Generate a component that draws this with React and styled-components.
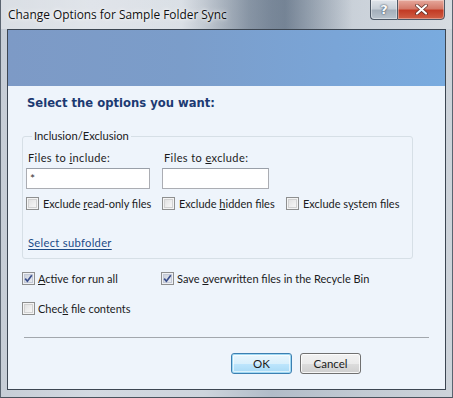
import React from "react";
import styled, { createGlobalStyle, css } from "styled-components";

const GlobalStyle = createGlobalStyle`
  html, body { margin: 0; padding: 0; background: #ffffff; }
  body { width: 453px; height: 398px; overflow: hidden; }
`;

const ui = `Lato, "Open Sans", "Liberation Sans", sans-serif`;

const Window = styled.div`
  width: 453px;
  height: 398px;
  box-sizing: border-box;
  display: flex;
  flex-direction: column;
  background: linear-gradient(90deg, #c6cdd6 0%, #d3d9e1 20%, #cdd4dc 45%, #b1bcc8 60%, #c2cad3 80%, #cdd3da 100%);
  border-left: 1px solid #5a6470;
  border-right: 1px solid #5a6470;
  border-bottom: 1px solid #4a525c;
  font-family: ${ui};
`;

const TitleBar = styled.div`
  height: 29px;
  flex: none;
  display: flex;
  align-items: flex-start;
  justify-content: space-between;
  padding: 0 7px 0 7px;
  background: linear-gradient(90deg, rgba(255,255,255,0.35) 0%, rgba(255,255,255,0.25) 40%, rgba(40,60,85,0.35) 55%, rgba(40,60,85,0.45) 63%, rgba(255,255,255,0.15) 78%, rgba(255,255,255,0.2) 100%);
`;

const Title = styled.div`
  margin-top: 6px;
  font-family: "Open Sans", sans-serif;
  font-size: 11.9px;
  line-height: 17px;
  color: #111;
  text-shadow: 0 0 6px rgba(255,255,255,0.9), 0 0 3px rgba(255,255,255,0.9);
  white-space: nowrap;
`;

const Caption = styled.div`
  display: flex;
  margin-top: -1px;
`;

const CapBtn = styled.div`
  height: 21px;
  box-sizing: border-box;
  display: flex;
  align-items: center;
  justify-content: center;
  border: 1px solid #4d5866;
  color: #fff;
  font-family: "DejaVu Sans", sans-serif;
  font-weight: bold;
  ${(p) =>
    p.$kind === "close"
      ? css`
          width: 48px;
          border-radius: 0 0 4px 0;
          background: linear-gradient(180deg, #e6a89c 0%, #d47a6a 45%, #c23b25 55%, #cf5f45 100%);
          box-shadow: inset 0 0 0 1px rgba(255,255,255,0.35);
        `
      : css`
          width: 27px;
          border-right: none;
          border-radius: 0 0 0 4px;
          background: linear-gradient(180deg, #dfe4ea 0%, #c6ced7 45%, #a4afbb 55%, #b9c3cd 100%);
          box-shadow: inset 0 0 0 1px rgba(255,255,255,0.4);
          font-size: 13px;
          color: #fbfcfd;
          text-shadow: 0 0 2px #435163, 0 0 1px #435163;
        `}
`;

const Client = styled.div`
  flex: 1;
  margin: 0 6px 7px 6px;
  border: 1px solid #3c4652;
  display: flex;
  flex-direction: column;
  background: #eef4fb;
`;

const Banner = styled.div`
  height: 56px;
  flex: none;
  background: linear-gradient(90deg, #7d9ac6 0%, #7b9dca 40%, #7aa5d7 75%, #79abdf 100%);
`;

const Body = styled.div`
  flex: 1;
  display: flex;
  flex-direction: column;
  padding: 9px 0 0 14px;
`;

const Heading = styled.div`
  margin-left: 5px;
  font-family: "DejaVu Sans", Verdana, sans-serif;
  font-weight: bold;
  font-size: 11.6px;
  line-height: 16px;
  color: #1c3a72;
`;

const Group = styled.fieldset`
  margin: 18px 0 0 0;
  width: 391px;
  box-sizing: border-box;
  border: 1px solid #d6dfe6;
  border-radius: 3px;
  padding: 7px 0 8px 3px;
  min-width: 0;
`;

const Legend = styled.legend`
  margin-left: 6px;
  padding: 0 2px 0 2px;
  font-size: 11.2px;
  line-height: 14px;
  color: #1b1b1b;
`;

const Text = styled.span`
  font-size: 11px;
  line-height: 15px;
  color: #1b1b1b;
  white-space: nowrap;
`;

const FieldRow = styled.div`
  display: grid;
  grid-template-columns: 136px 124px;
  align-items: start;
`;

const Field = styled.div`
  display: flex;
  flex-direction: column;
  gap: 3px;
`;

const FieldLabel = styled(Text)`
  padding-left: 2px;
  letter-spacing: 0.4px;
`;

const Input = styled.input`
  box-sizing: border-box;
  width: ${(p) => p.$w}px;
  height: 21px;
  margin: 0;
  border: 1px solid #abadb3;
  border-top-color: #999fa8;
  background: #fff;
  font-family: ${ui};
  font-size: 12px;
  color: #333;
  padding: 0 3px;
  outline: none;
`;

const CheckRow = styled.div`
  display: grid;
  grid-template-columns: ${(p) => p.$cols};
  margin-top: ${(p) => p.$mt || 0}px;
  align-items: center;
`;

const CheckItem = styled.label`
  display: flex;
  align-items: center;
  gap: ${(p) => p.$gap ?? 4}px;
`;

const Box = styled.span`
  width: 13px;
  height: 13px;
  box-sizing: border-box;
  flex: none;
  border: 1px solid #8e8f8f;
  background: linear-gradient(135deg, #dcdcdc 0%, #f0f0f0 60%, #fbfbfb 100%);
  box-shadow: inset 0 0 0 1px #f4f4f4, inset 0 0 0 2px #d2d2d2;
  display: flex;
  align-items: center;
  justify-content: center;
  ${(p) =>
    p.$checked &&
    css`
      background: linear-gradient(135deg, #c6cbd6 0%, #dfe3ea 60%, #eef0f4 100%);
      box-shadow: inset 0 0 0 1px #eef0f4, inset 0 0 0 2px #c3c9d6;
    `}
`;

const LinkText = styled.a`
  display: block;
  margin-top: 24px;
  padding-left: 2px;
  font-size: 11.2px;
  line-height: 15px;
  letter-spacing: 0.3px;
  color: #1c4b87;
  text-decoration: underline;
  text-underline-offset: 2px;
  width: max-content;
`;

const Options = styled.div`
  display: flex;
  flex-direction: column;
  gap: 15px;
  margin-top: 12px;
`;

const Separator = styled.hr`
  margin: 21px 0 0 2px;
  width: 405px;
  border: none;
  border-top: 1px solid #a2a7ad;
  height: 0;
`;

const Buttons = styled.div`
  display: flex;
  gap: 8px;
  margin: 15px 0 0 209px;
`;

const Button = styled.button`
  width: 61px;
  height: 21px;
  box-sizing: border-box;
  padding: 0;
  border-radius: 3px;
  font-family: ${ui};
  font-size: 11.5px;
  color: #1b1b1b;
  ${(p) =>
    p.$default
      ? css`
          border: 1px solid #3c7fb1;
          background: linear-gradient(180deg, #eaf6fd 0%, #d9f0fc 50%, #bee6fd 51%, #a7d9f5 100%);
          box-shadow: inset 0 0 0 1px #9fd8f3, inset 0 0 0 2px rgba(255,255,255,0.6);
        `
      : css`
          border: 1px solid #707070;
          background: linear-gradient(180deg, #f2f2f2 0%, #ebebeb 50%, #dddddd 51%, #cfcfcf 100%);
          box-shadow: inset 0 0 0 1px rgba(255,255,255,0.8);
        `}
`;

const Check = () => (
  <svg width="9" height="9" viewBox="0 0 9 9">
    <path d="M1.2 4.6 L3.4 7.2 L7.8 1.2" fill="none" stroke="#3b4f8c" strokeWidth="1.7" />
  </svg>
);

const CheckBox = ({ checked, children, gap }) => (
  <CheckItem $gap={gap}>
    <Box $checked={checked}>{checked && <Check />}</Box>
    <Text>{children}</Text>
  </CheckItem>
);

export default function App() {
  return (
    <>
      <GlobalStyle />
      <Window>
        <TitleBar>
          <Title>Change Options for Sample Folder Sync</Title>
          <Caption>
            <CapBtn $kind="help">?</CapBtn>
            <CapBtn $kind="close">
              <svg width="13" height="11" viewBox="0 0 13 11">
                <path d="M2 1.5 L11 9.5 M11 1.5 L2 9.5" stroke="#5a2a22" strokeWidth="3.6" strokeLinecap="round" />
                <path d="M2 1.5 L11 9.5 M11 1.5 L2 9.5" stroke="#ffffff" strokeWidth="2.2" strokeLinecap="round" />
              </svg>
            </CapBtn>
          </Caption>
        </TitleBar>
        <Client>
          <Banner />
          <Body>
            <Heading>Select the options you want:</Heading>
            <Group>
              <Legend>Inclusion/Exclusion</Legend>
              <FieldRow>
                <Field>
                  <FieldLabel>
                    Files to <u>i</u>nclude:
                  </FieldLabel>
                  <Input $w={124} defaultValue="*" />
                </Field>
                <Field>
                  <FieldLabel>
                    Files to <u>e</u>xclude:
                  </FieldLabel>
                  <Input $w={107} defaultValue="" />
                </Field>
              </FieldRow>
              <CheckRow $cols="136px 124px auto" $mt={7}>
                <CheckBox>
                  Exclude <u>r</u>ead-only files
                </CheckBox>
                <CheckBox>
                  Exclude <u>h</u>idden files
                </CheckBox>
                <CheckBox>
                  Exclude s<u>y</u>stem files
                </CheckBox>
              </CheckRow>
              <LinkText href="#">Select subfolder</LinkText>
            </Group>
            <Options>
              <CheckRow $cols="139px auto">
                <CheckBox checked gap={3}>
                  <u>A</u>ctive for run all
                </CheckBox>
                <CheckBox checked gap={3}>
                  Save <u>o</u>verwritten files in the Recycle Bin
                </CheckBox>
              </CheckRow>
              <CheckRow $cols="auto">
                <CheckBox gap={3}>
                  Chec<u>k</u> file contents
                </CheckBox>
              </CheckRow>
            </Options>
            <Separator />
            <Buttons>
              <Button $default>OK</Button>
              <Button>Cancel</Button>
            </Buttons>
          </Body>
        </Client>
      </Window>
    </>
  );
}
